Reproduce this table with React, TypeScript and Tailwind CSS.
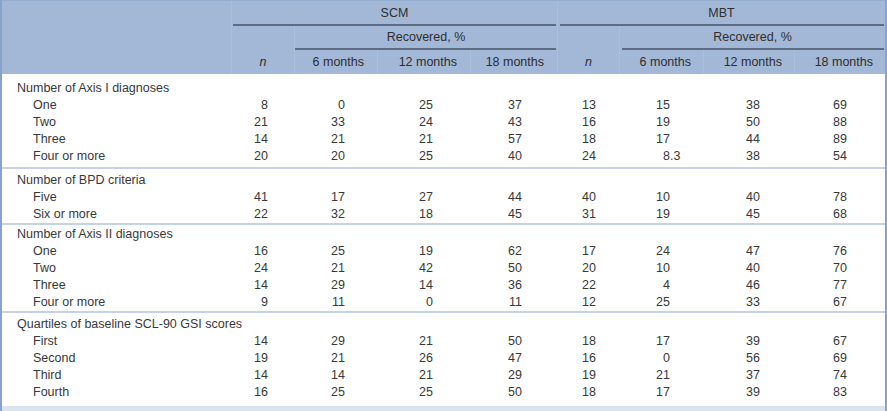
import React from "react";

type Row = { label: string; v: string[] };
type Section = { title: string; rows: Row[]; pad: string };

const sections: Section[] = [
  {
    title: "Number of Axis I diagnoses",
    pad: "pt-[6px] pb-[2px]",
    rows: [
      { label: "One", v: ["8", "0", "25", "37", "13", "15", "38", "69"] },
      { label: "Two", v: ["21", "33", "24", "43", "16", "19", "50", "88"] },
      { label: "Three", v: ["14", "21", "21", "57", "18", "17", "44", "89"] },
      { label: "Four or more", v: ["20", "20", "25", "40", "24", "8.3", "38", "54"] },
    ],
  },
  {
    title: "Number of BPD criteria",
    pad: "pt-[3px] border-t-2 border-[#c2d2e7]",
    rows: [
      { label: "Five", v: ["41", "17", "27", "44", "40", "10", "40", "78"] },
      { label: "Six or more", v: ["22", "32", "18", "45", "31", "19", "45", "68"] },
    ],
  },
  {
    title: "Number of Axis II diagnoses",
    pad: "pt-[1px] border-t-2 border-[#c2d2e7]",
    rows: [
      { label: "One", v: ["16", "25", "19", "62", "17", "24", "47", "76"] },
      { label: "Two", v: ["24", "21", "42", "50", "20", "10", "40", "70"] },
      { label: "Three", v: ["14", "29", "14", "36", "22", "4", "46", "77"] },
      { label: "Four or more", v: ["9", "11", "0", "11", "12", "25", "33", "67"] },
    ],
  },
  {
    title: "Quartiles of baseline SCL-90 GSI scores",
    pad: "pt-[3px] pb-[5px] border-t-2 border-[#c2d2e7]",
    rows: [
      { label: "First", v: ["14", "29", "21", "50", "18", "17", "39", "67"] },
      { label: "Second", v: ["19", "21", "26", "47", "16", "0", "56", "69"] },
      { label: "Third", v: ["14", "14", "21", "29", "19", "21", "37", "74"] },
      { label: "Fourth", v: ["16", "25", "25", "50", "18", "17", "39", "83"] },
    ],
  },
];

const cols = "grid grid-cols-[230px_63px_83px_93px_87px_62px_84px_91px_90px]";
const pr = [
  "pr-[27px]",
  "pr-[33px]",
  "pr-[38px]",
  "pr-[36px]",
  "pr-[24px]",
  "pr-[34px]",
  "pr-[35px]",
  "pr-[38px]",
];

function Num({ value }: { value: string }) {
  const [i, f] = value.split(".");
  return (
    <span className="whitespace-nowrap">
      {i}
      {f !== undefined && <span className="inline-block w-0 whitespace-nowrap">.{f}</span>}
    </span>
  );
}

const sep = "border-r border-[#abbfda]";

export default function App() {
  return (
    <div
      className="w-[887px] h-[411px] overflow-hidden bg-white text-[#383838] text-[12.5px] border-l-2 border-r-2 border-[#87a3cc]"
      style={{ fontFamily: '"Liberation Sans", Arial, sans-serif' }}
    >
      {/* Header */}
      <div className={`${cols} bg-[#a3b8d7] text-[#2e2e2e] grid-rows-[25px_24px_24px] border-t border-[#94aed2]`}>
        <div className={`row-span-3 col-start-1 ${sep}`} />
        {/* Row 1 */}
        <div className={`col-start-2 col-span-4 row-start-1 flex flex-col ${sep}`}>
          <div className="flex-1 flex items-center justify-center pt-[1px]">SCM</div>
          <div className="h-[2px] bg-[#5d6c82] ml-[1px] mr-[1px]" />
        </div>
        <div className="col-start-6 col-span-4 row-start-1 flex flex-col">
          <div className="flex-1 flex items-center justify-center pt-[1px]">MBT</div>
          <div className="h-[2px] bg-[#5d6c82] ml-[2px] mr-[1px]" />
        </div>
        {/* Row 2 */}
        <div className={`col-start-2 row-start-2 ${sep}`} />
        <div className={`col-start-3 col-span-3 row-start-2 flex flex-col ${sep}`}>
          <div className="flex-1 flex items-center justify-center">Recovered, %</div>
          <div className="h-[2px] bg-[#5d6c82] mr-[1px]" />
        </div>
        <div className={`col-start-6 row-start-2 ${sep}`} />
        <div className="col-start-7 col-span-3 row-start-2 flex flex-col">
          <div className="flex-1 flex items-center justify-center">Recovered, %</div>
          <div className="h-[2px] bg-[#5d6c82] ml-[2px] mr-[1px]" />
        </div>
        {/* Row 3 */}
        <div className={`row-start-3 col-start-2 flex items-center justify-center italic ${sep}`}>n</div>
        <div className={`row-start-3 col-start-3 flex items-center justify-end pr-[13px] ${sep}`}>6 months</div>
        <div className={`row-start-3 col-start-4 flex items-center justify-end pr-[13px] ${sep}`}>12 months</div>
        <div className={`row-start-3 col-start-5 flex items-center justify-end pr-[13px] ${sep}`}>18 months</div>
        <div className={`row-start-3 col-start-6 flex items-center justify-center italic ${sep}`}>n</div>
        <div className={`row-start-3 col-start-7 flex items-center justify-end pr-[12px] ${sep}`}>6 months</div>
        <div className={`row-start-3 col-start-8 flex items-center justify-end pr-[12px] ${sep}`}>12 months</div>
        <div className="row-start-3 col-start-9 flex items-center justify-end pr-[12px]">18 months</div>
      </div>

      {/* Body */}
      {sections.map((s) => (
        <div key={s.title} className={s.pad}>
          <div className="h-[17px] leading-[17px] pl-[15px] whitespace-nowrap">{s.title}</div>
          {s.rows.map((r) => (
            <div key={r.label} className={`${cols} h-[17px] leading-[17px]`}>
              <div className="pl-[31px] whitespace-nowrap">{r.label}</div>
              {r.v.map((v, i) => (
                <div key={i} className={`text-right ${pr[i]}`}>
                  <Num value={v} />
                </div>
              ))}
            </div>
          ))}
        </div>
      ))}
      <div className="h-[10px] bg-[#dae3f0]" />
    </div>
  );
}
